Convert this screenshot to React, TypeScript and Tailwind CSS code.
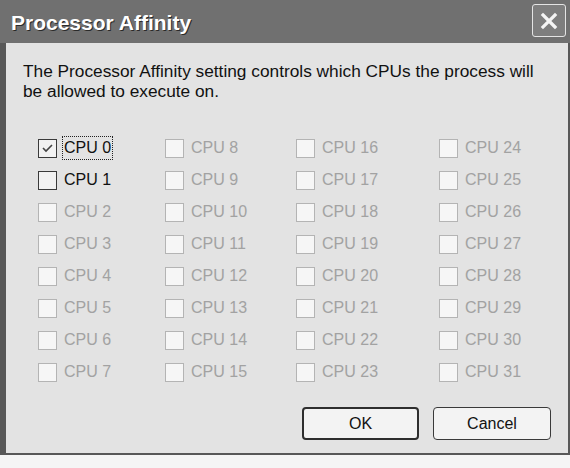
import React from "react";

// CPU columns: 8 rows each, only the first two are selectable
const columns = [0, 1, 2, 3].map((c) => Array.from({ length: 8 }, (_, r) => c * 8 + r));

function CheckMark() {
  return (
    <svg width="11" height="9" viewBox="0 0 11 9" className="block">
      <path d="M1 4 L4 7 L10 1" fill="none" stroke="#444" strokeWidth="1.6" />
    </svg>
  );
}

function CpuBox({ n }: { n: number }) {
  const enabled = n < 2;
  const checked = n === 0;
  return (
    <div className="flex items-center h-[32px]">
      <div
        className={`w-[19px] h-[19px] flex items-center justify-center border ${
          enabled ? "border-[#3a3a3a] bg-[#f2f2f2]" : "border-[#b4b4b4] bg-[#f6f6f6]"
        }`}
      >
        {checked && <CheckMark />}
      </div>
      <span
        className={`ml-[5px] px-[1px] leading-[22px] text-[16px] ${
          checked ? "border border-dotted border-[#222]" : "border border-transparent"
        } ${enabled ? "text-[#111]" : "text-[#a2a2a2]"}`}
      >
        CPU {n}
      </span>
    </div>
  );
}

export default function App() {
  return (
    <div className="w-[570px] h-[468px] bg-[#f5f5f5] overflow-hidden" style={{ fontFamily: '"Liberation Sans", Arial, sans-serif' }}>
      <div className="w-[570px] h-[455px] flex flex-col bg-[#585858] pl-[6px] pr-[2px] pb-[2px]">
        {/* Title bar */}
        <div className="h-[43px] -ml-[6px] -mr-[2px] bg-[#707070] flex items-center justify-between pl-[11px] pr-[4px]">
          <span className="text-white font-bold text-[21px] leading-none [text-shadow:1px_1px_0_#2a2a2a] mt-[1px]">
            Processor Affinity
          </span>
          <div className="w-[34px] h-[33px] rounded-[3px] border border-[#e4e4e4] bg-[#7e7e7e] flex items-center justify-center mb-[2px]">
            <svg width="20" height="20" viewBox="0 0 20 20">
              <path d="M4 4 L16 16 M16 4 L4 16" stroke="#f4f4f4" strokeWidth="3.2" strokeLinecap="square" />
            </svg>
          </div>
        </div>

        {/* Body */}
        <div className="flex-1 bg-[#e3e3e3] flex flex-col pl-[17px] pr-[14px] pt-[18px]">
          <p className="text-[17.3px] leading-[20px] text-[#111]">
            The Processor Affinity setting controls which CPUs the process will
            <br />
            be allowed to execute on.
          </p>

          <div className="grid grid-cols-[127px_131px_143px_auto] mt-[31px] ml-[15px]">
            {columns.map((col, i) => (
              <div key={i} className="flex flex-col">
                {col.map((n) => (
                  <CpuBox key={n} n={n} />
                ))}
              </div>
            ))}
          </div>

          <div className="flex justify-end gap-[14px] mt-[19px] pr-[3px]">
            <button className="w-[117px] h-[33px] rounded-[4px] border-2 border-[#2e2e2e] bg-[#f3f3f3] text-[16px] text-[#111]">
              OK
            </button>
            <button className="w-[118px] h-[33px] rounded-[4px] border border-[#3a3a3a] bg-[#f3f3f3] text-[16px] text-[#111]">
              Cancel
            </button>
          </div>
        </div>
      </div>
    </div>
  );
}
